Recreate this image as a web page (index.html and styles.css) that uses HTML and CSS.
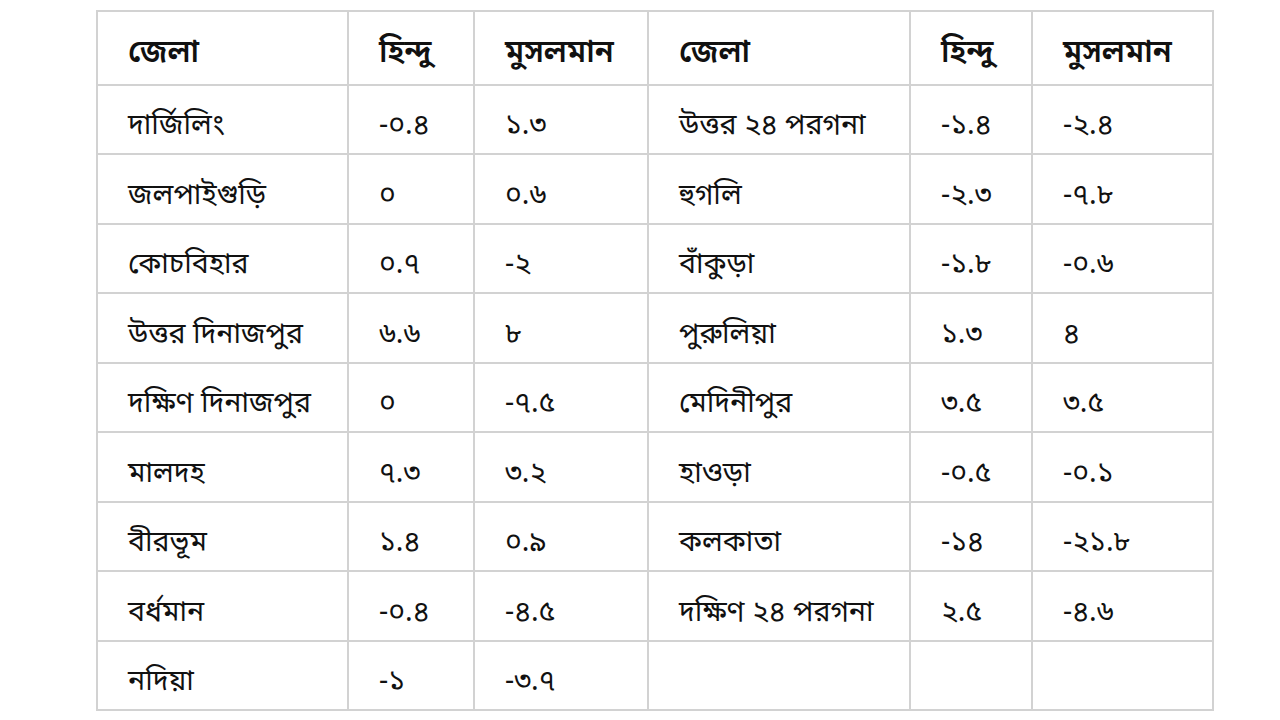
FILE: index.html
```html
<!DOCTYPE html>
<html lang="bn">
<head>
<meta charset="utf-8">
<link rel="stylesheet" href="styles.css">
</head>
<body>
<div class="page">
<table class="data">
<colgroup>
<col class="c1"><col class="c2"><col class="c3"><col class="c4"><col class="c5"><col class="c6">
</colgroup>
<thead>
<tr><th>জেলা</th><th>হিন্দু</th><th>মুসলমান</th><th>জেলা</th><th>হিন্দু</th><th>মুসলমান</th></tr>
</thead>
<tbody>
<tr><td>দার্জিলিং</td><td>-০.৪</td><td>১.৩</td><td>উত্তর ২৪ পরগনা</td><td>-১.৪</td><td>-২.৪</td></tr>
<tr><td>জলপাইগুড়ি</td><td>০</td><td>০.৬</td><td>হুগলি</td><td>-২.৩</td><td>-৭.৮</td></tr>
<tr><td>কোচবিহার</td><td>০.৭</td><td>-২</td><td>বাঁকুড়া</td><td>-১.৮</td><td>-০.৬</td></tr>
<tr><td>উত্তর দিনাজপুর</td><td>৬.৬</td><td>৮</td><td>পুরুলিয়া</td><td>১.৩</td><td>৪</td></tr>
<tr><td>দক্ষিণ দিনাজপুর</td><td>০</td><td>-৭.৫</td><td>মেদিনীপুর</td><td>৩.৫</td><td>৩.৫</td></tr>
<tr><td>মালদহ</td><td>৭.৩</td><td>৩.২</td><td>হাওড়া</td><td>-০.৫</td><td>-০.১</td></tr>
<tr><td>বীরভূম</td><td>১.৪</td><td>০.৯</td><td>কলকাতা</td><td>-১৪</td><td>-২১.৮</td></tr>
<tr><td>বর্ধমান</td><td>-০.৪</td><td>-৪.৫</td><td>দক্ষিণ ২৪ পরগনা</td><td>২.৫</td><td>-৪.৬</td></tr>
<tr><td>নদিয়া</td><td>-১</td><td>-৩.৭</td><td></td><td></td><td></td></tr>
</tbody>
</table>
</div>
</body>
</html>
```
FILE: styles.css
```css
html, body {
  margin: 0;
  padding: 0;
  background: #ffffff;
}
body {
  font-family: "Noto Sans Bengali", "Noto Sans", sans-serif;
  color: #111111;
}
.page {
  width: 1280px;
  height: 720px;
  padding: 10px 0 0 96px;
  box-sizing: border-box;
}
.data {
  border-collapse: collapse;
  table-layout: fixed;
  width: 1116px;
}
.c1 { width: 251px; }
.c2 { width: 126px; }
.c3 { width: 174px; }
.c4 { width: 262px; }
.c5 { width: 122px; }
.c6 { width: 181px; }
.data th, .data td {
  border: 2px solid #d2d2d2;
  text-align: left;
  vertical-align: middle;
  padding-left: 30px;
  padding-right: 0;
  padding-bottom: 0;
  white-space: nowrap;
  line-height: 1;
}
.data th {
  padding-top: 12px;
  height: 60px;
  font-size: 31px;
  font-weight: 600;
}
.data td {
  padding-top: 16px;
  height: 51.45px;
  font-size: 28.5px;
  font-weight: 400;
}
```
